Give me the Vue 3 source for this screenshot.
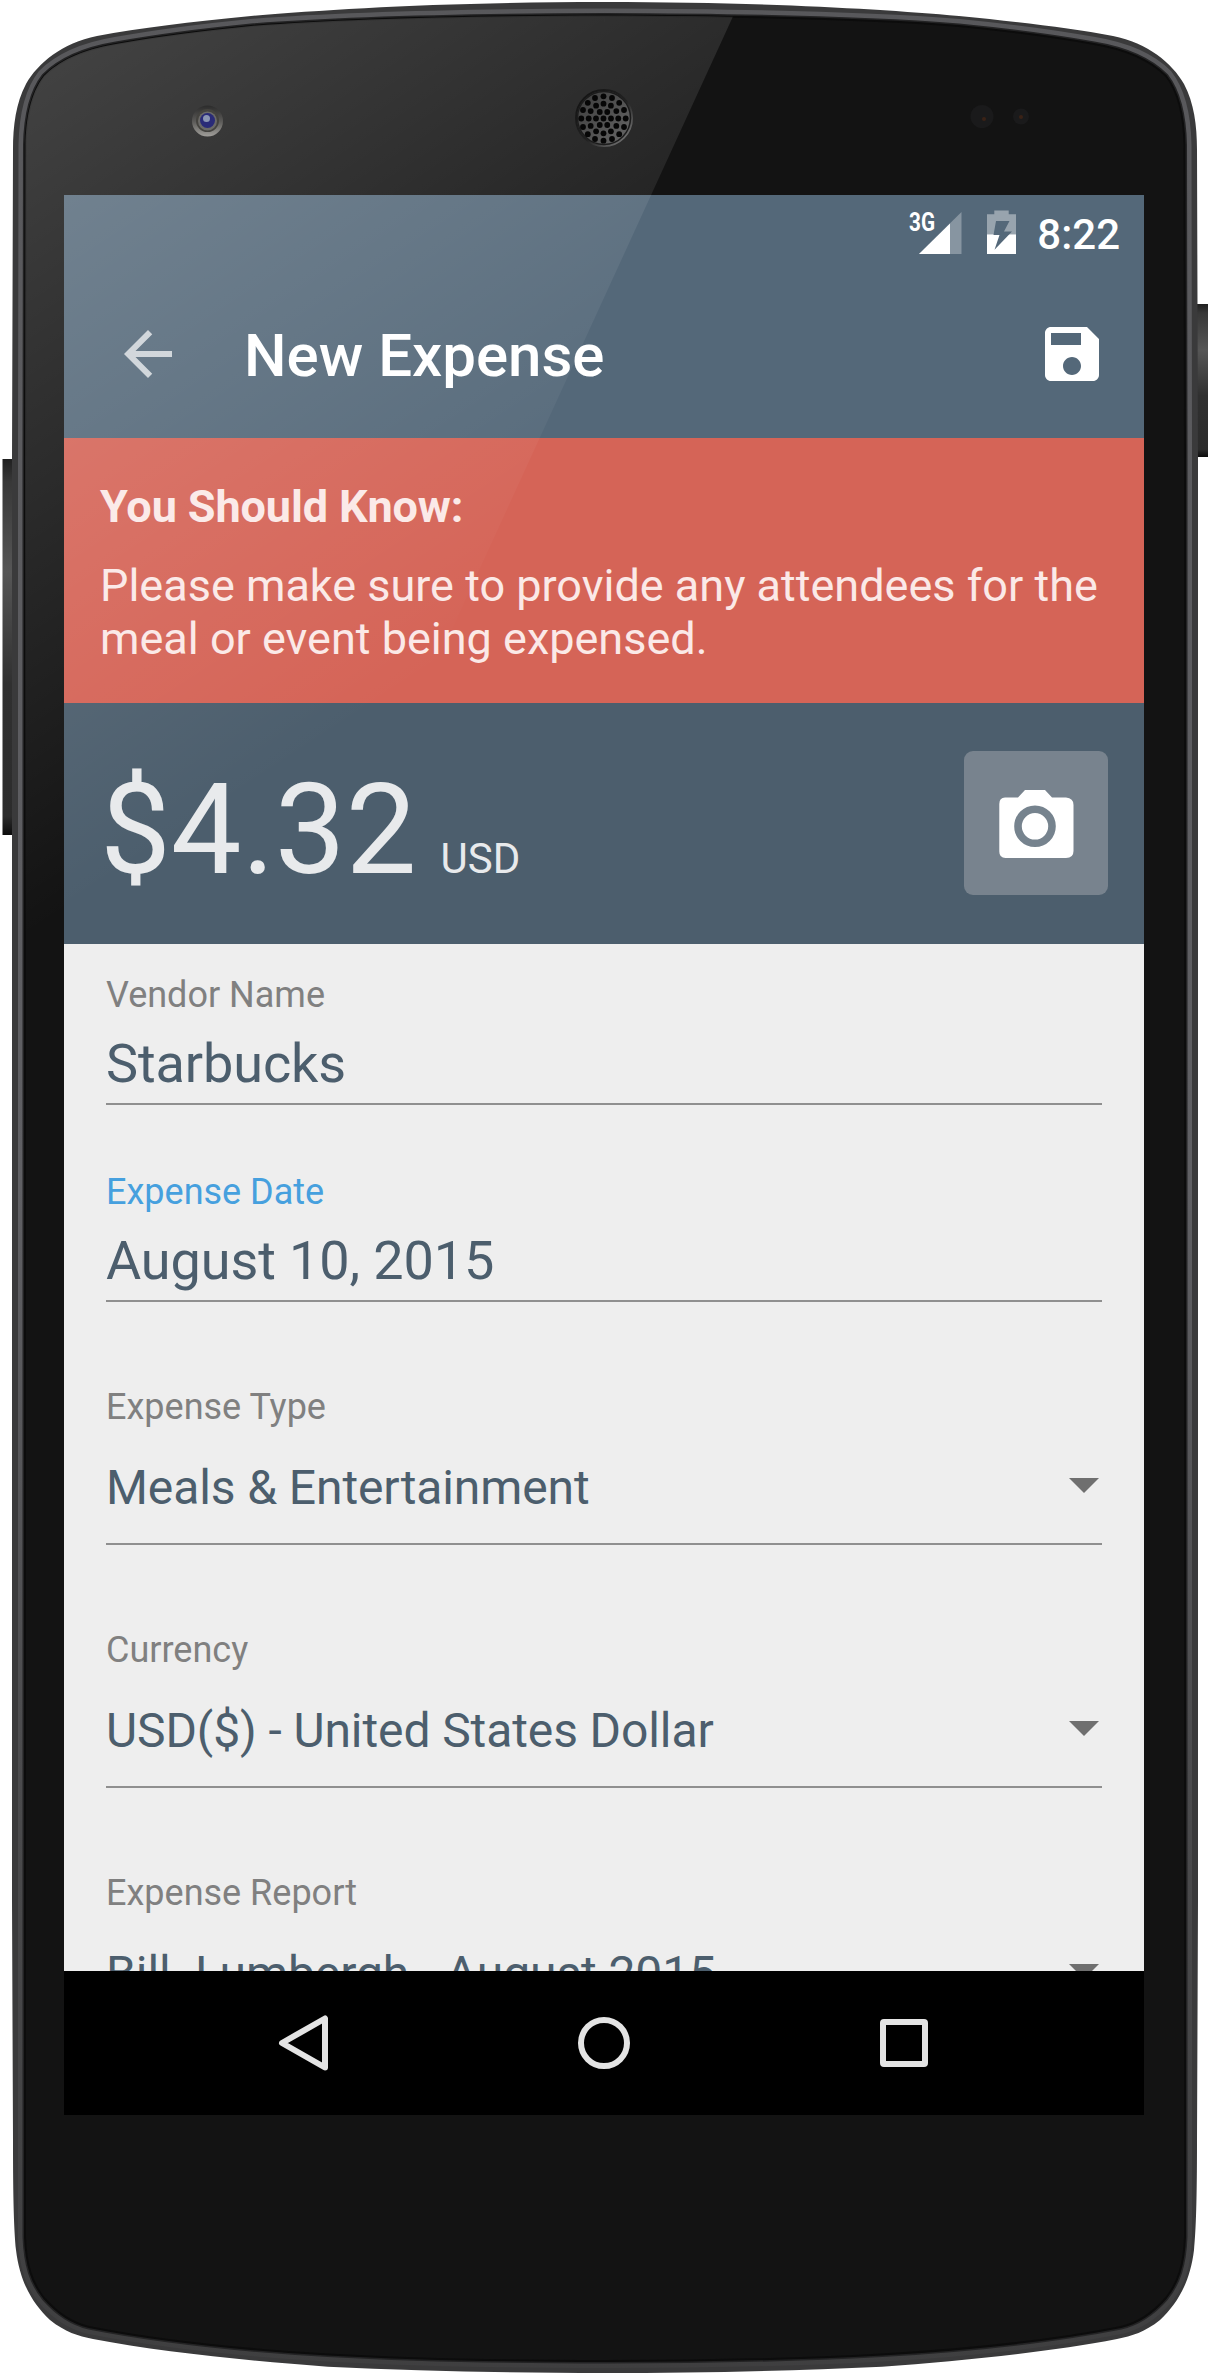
<template>
    <div class="phone">
        <svg class="shell" viewBox="0 0 1210 2375" aria-hidden="true">
            <defs>
                <linearGradient id="rim" gradientUnits="userSpaceOnUse" x1="0" y1="0" x2="0" y2="2375">
                    <stop offset="0" stop-color="#58585b" />
                    <stop offset="0.5" stop-color="#606064" />
                    <stop offset="0.75" stop-color="#4b4b4d" />
                    <stop offset="1" stop-color="#3f3f40" />
                </linearGradient>
                <linearGradient id="button" x1="0" y1="0" x2="0" y2="1">
                    <stop offset="0" stop-color="#202020" />
                    <stop offset="0.06" stop-color="#383838" />
                    <stop offset="0.3" stop-color="#565656" />
                    <stop offset="0.6" stop-color="#303030" />
                    <stop offset="0.95" stop-color="#2c2c2c" />
                    <stop offset="1" stop-color="#0c0c0c" />
                </linearGradient>
                <linearGradient id="lens" x1="0" y1="0" x2="0" y2="1">
                    <stop offset="0" stop-color="#2b2b2b" />
                    <stop offset="0.5" stop-color="#5a5957" />
                    <stop offset="1" stop-color="#a09e9a" />
                </linearGradient>
                <linearGradient id="mesh" x1="0" y1="0" x2="1" y2="1">
                    <stop offset="0" stop-color="#3a3a3a" />
                    <stop offset="1" stop-color="#686868" />
                </linearGradient>
                <linearGradient id="meshRing" x1="0" y1="0" x2="1" y2="1">
                    <stop offset="0" stop-color="#111" />
                    <stop offset="0.55" stop-color="#222" />
                    <stop offset="1" stop-color="#8a8a8a" />
                </linearGradient>
                <g id="half">
                    <path :d="outerPath" fill="#3a3a3b" />
                    <path :d="glassPath" fill="none" stroke="url(#rim)" stroke-width="14" />
                    <path :d="glassPath" fill="#131313" stroke="#232324" stroke-width="5" />
                    <path :d="glassPath" fill="#131313" stroke="#0c0c0c" stroke-width="2" />
                </g>
            </defs>

            <!-- volume and power buttons -->
            <rect x="2.5" y="459" width="14" height="376" fill="url(#button)" />
            <rect x="1194" y="304" width="14" height="153" fill="url(#button)" />

            <use href="#half" />
            <use href="#half" transform="matrix(-1 0 0 1 1210 0)" />
        </svg>

        <div class="screen">
            <header class="status-bar">
                <svg class="signal" width="54" height="44" viewBox="0 0 54 44">
                    <text x="0" y="20.500" textLength="26" lengthAdjust="spacingAndGlyphs">3G</text>
                    <path d="M52.5 2v42H10z" fill="#fff" fill-opacity="0.3" />
                    <path d="M41 13.4V44H10z" fill="#fff" />
                </svg>
                <svg class="battery" width="29" height="44" viewBox="0 0 29 44">
                    <defs>
                        <mask id="bolt">
                            <rect width="29" height="44" fill="#fff" />
                            <path d="M9 11h13.5l-5.5 10.5h8L7.5 39.8 12.5 25H6.5z" fill="#000" />
                        </mask>
                    </defs>
                    <g mask="url(#bolt)" fill="#fff">
                        <path d="M0 4.3h7.3V.5h14.4v3.8H29v20H0z" fill-opacity="0.4" />
                        <path d="M0 24.3h29V44H0z" />
                    </g>
                </svg>
                <span class="clock">8:22</span>
            </header>

            <div class="toolbar">
                <svg class="back" width="72" height="72" viewBox="0 0 24 24">
                    <path d="M20 11H7.83l5.59-5.59L12 4l-8 8 8 8 1.41-1.41L7.83 13H20v-2z" />
                </svg>
                <h1>New Expense</h1>
                <svg width="72" height="72" viewBox="0 0 24 24" fill="#fff">
                    <path d="M17 3H5c-1.11 0-2 .9-2 2v14c0 1.1.89 2 2 2h14c1.1 0 2-.9 2-2V7l-4-4zm-5 16c-1.66 0-3-1.34-3-3s1.34-3 3-3 3 1.34 3 3-1.34 3-3 3zm3-10H5V5h10v4z" />
                </svg>
            </div>

            <div class="notice">
                <strong>You Should Know:</strong>
                <p>Please make sure to provide any attendees for the meal or event being expensed.</p>
            </div>

            <div class="amount">
                <div class="price">
                    <span class="value">$4.32</span>
                    <span class="unit">USD</span>
                </div>
                <div class="camera">
                    <svg width="144" height="144" viewBox="0 0 144 144">
                        <path
                            d="M41 46.500H54L61 39H81L88 46.500H102Q109.500 47 109.500 54V100Q109.500 107 102 107H41.500Q35.300 107 35.300 100.500V53Q35.300 46.500 41 46.500Z"
                            fill="#fff"
                        />
                        <circle cx="71" cy="75.300" r="17" fill="none" stroke="#76838e" stroke-width="7.600" />
                    </svg>
                </div>
            </div>

            <main class="form">
                <div
                    v-for="field in fields"
                    :key="field.label"
                    class="field"
                    :class="{ select: field.select, active: field.active }"
                >
                    <label>{{ field.label }}</label>
                    <div class="input">
                        <span>{{ field.value }}</span>
                        <svg v-if="field.select" width="36" height="15" viewBox="0 0 36 15">
                            <path d="M3 0h30L18 15z" fill="#6f6f6f" />
                        </svg>
                    </div>
                </div>
            </main>

            <nav class="nav-bar">
                <div>
                    <svg width="60" height="60" viewBox="0 0 60 60">
                        <path d="M51 5.500v49L8 30z" />
                    </svg>
                </div>
                <div>
                    <svg width="60" height="60" viewBox="0 0 60 60">
                        <circle cx="30" cy="30" r="23" />
                    </svg>
                </div>
                <div>
                    <svg width="60" height="60" viewBox="0 0 60 60">
                        <rect x="9" y="9" width="42" height="42" rx="1" />
                    </svg>
                </div>
            </nav>
        </div>

        <!-- light reflection and the parts that sit in the glass -->
        <svg class="shell" viewBox="0 0 1210 2375" aria-hidden="true">
            <defs>
                <linearGradient id="gloss" gradientUnits="userSpaceOnUse" x1="0" y1="0" x2="438" y2="671">
                    <stop offset="0" stop-color="#fff" stop-opacity="0.22" />
                    <stop offset="1" stop-color="#fff" stop-opacity="0" />
                </linearGradient>
                <clipPath id="glass">
                    <path :d="glassPath" />
                    <path :d="glassPath" transform="matrix(-1 0 0 1 1210 0)" />
                </clipPath>
            </defs>
            <path d="M0 0H740.500L282 1000H0z" fill="url(#gloss)" clip-path="url(#glass)" />

            <circle cx="207.500" cy="121" r="15.500" fill="url(#lens)" />
            <circle cx="207.500" cy="120.500" r="11.500" fill="#44433f" />
            <circle cx="207.500" cy="121" r="9.500" fill="#6b6a68" />
            <circle cx="207.500" cy="120.500" r="7.500" fill="#2a2b78" />
            <circle cx="206.500" cy="118.500" r="3.500" fill="#8b96b4" />

            <circle cx="604" cy="118" r="28" fill="url(#mesh)" stroke="url(#meshRing)" stroke-width="2" />
            <circle cx="604" cy="118" r="26.500" fill="none" stroke="#1c1c1c" stroke-width="1.500" />
            <circle v-for="(h, i) in holes" :key="i" :cx="h.x" :cy="h.y" r="2.900" fill="#060606" />

            <circle cx="982" cy="116.500" r="11.500" fill="#1a1a1b" />
            <circle cx="984" cy="119" r="2" fill="#3a2216" />
            <circle cx="1021" cy="116.500" r="8" fill="#1a1a1b" />
            <circle cx="1021" cy="117" r="2" fill="#3a2216" />
        </svg>
    </div>
</template>

<script setup>
// left half of the device, the right one is mirrored
// both stay open on the centre line so that the strokes leave no seam there
const outerPath =
    'M605 2C450 2 330 9 251 16C190 22 140 28 97 36C62 43 38 63 26 84C16 103 13 125 13 150L12 460V1900L13 2140C13 2200 14 2230 16 2250C20 2283 33 2304 50 2320C65 2332 78 2336 93 2339C160 2352 250 2361 328 2366.7C420 2371 510 2373 605 2373'
const glassPath =
    'M605 15.500C460 16 340 19 251 26C200 31 155 37 116 44C80 50 58 62 44 76C30 94 26 120 25.500 145L25 460V2237C26 2265 32 2283 44 2298C58 2314 72 2323 89 2327C160 2341 250 2350 328 2354.500C420 2359.500 510 2361 605 2361'

const fields = [
    { label: 'Vendor Name', value: 'Starbucks' },
    { label: 'Expense Date', value: 'August 10, 2015', active: true },
    { label: 'Expense Type', value: 'Meals & Entertainment', select: true },
    { label: 'Currency', value: 'USD($) - United States Dollar', select: true },
    { label: 'Expense Report', value: 'Bill. Lumbergh - August 2015', select: true }
]

// speaker grille: rings of [count, radius]
const rings = [
    [1, 0],
    [6, 7.5],
    [12, 14.8],
    [16, 22.2]
]

const holes = rings.flatMap(([count, radius]) =>
    Array.from({ length: count }, (_, i) => {
        const a = (i * 2 * Math.PI) / count
        return { x: 603.5 + radius * Math.cos(a), y: 118.5 + radius * Math.sin(a) }
    })
)
</script>

<style>
body {
    margin: 0;
    background: #fff;
}
</style>

<style scoped>
.phone {
    position: relative;
    box-sizing: border-box;
    width: 1210px;
    height: 2375px;
    padding: 195px 66px 260px 64px;
    overflow: hidden;
    font-family: Roboto, "Noto Sans", sans-serif;
}

.shell {
    position: absolute;
    top: 0;
    left: 0;
    width: 1210px;
    height: 2375px;
}

.screen {
    position: relative;
    display: flex;
    flex-direction: column;
    width: 1080px;
    height: 1920px;
    overflow: hidden;
    background: #eee;
}

.status-bar {
    display: flex;
    flex: none;
    justify-content: flex-end;
    height: 75px;
    padding-right: 24px;
    background: #546879;
}

.status-bar svg {
    margin-top: 15px;
    overflow: visible;
}

.signal {
    margin-right: 24px;
}

.signal text {
    fill: #fff;
    font-size: 26px;
    font-weight: 700;
}

.battery {
    margin-right: 21px;
}

.clock {
    color: #fff;
    font-size: 42px;
    font-weight: 500;
    line-height: 80px;
}

.toolbar {
    display: flex;
    flex: none;
    align-items: center;
    height: 168px;
    padding: 0 36px 0 48px;
    box-sizing: border-box;
    background: #546879;
}

.back {
    fill: #fff;
    opacity: 0.7;
}

h1 {
    flex: 1;
    margin: 4px 0 0 60px;
    color: #fff;
    font-size: 60px;
    font-weight: 500;
    line-height: 70px;
}

.notice {
    flex: none;
    height: 265px;
    padding: 42px 36px 0;
    box-sizing: border-box;
    background: #d56457;
    color: #fbe9e7;
    font-size: 45px;
    line-height: 53px;
}

.notice strong {
    display: block;
    font-weight: 700;
    letter-spacing: -0.1px;
}

.notice p {
    margin: 26px 0 0;
}

.amount {
    display: flex;
    flex: none;
    justify-content: space-between;
    height: 241px;
    padding: 48px 36px;
    box-sizing: border-box;
    background: #4c5e6d;
    color: #e8eaec;
}

.price {
    display: flex;
    align-items: baseline;
    gap: 24px;
    line-height: 158px;
}

.value {
    font-size: 126px;
}

.unit {
    font-size: 42px;
}

.camera {
    width: 144px;
    height: 144px;
    border-radius: 9px;
    background: #78838e;
}

.form {
    flex: 1;
    min-height: 0;
    padding: 30px 42px 0;
    overflow: hidden;
}

.field {
    margin-bottom: 66px;
    border-bottom: 2px solid #8f8f8f;
}

.field label {
    display: block;
    color: #808080;
    font-size: 36px;
    line-height: 42px;
}

.field.active label {
    color: #46a0de;
}

.input {
    display: flex;
    align-items: center;
    justify-content: space-between;
    padding: 16px 0 7px;
    color: #4c5e6d;
    font-size: 54px;
    letter-spacing: -0.1px;
    line-height: 64px;
}

.select {
    margin: 84px 0;
}

.select .input {
    padding: 32px 0 27px;
    font-size: 48px;
    line-height: 56px;
}

.select svg {
    margin-bottom: 6px;
}

.nav-bar {
    display: flex;
    flex: none;
    justify-content: center;
    height: 144px;
    background: #000;
}

.nav-bar div {
    display: flex;
    align-items: center;
    justify-content: center;
    width: 300px;
}

.nav-bar svg {
    fill: none;
    stroke: #e4e4e4;
    stroke-width: 6;
    stroke-linejoin: round;
}
</style>
